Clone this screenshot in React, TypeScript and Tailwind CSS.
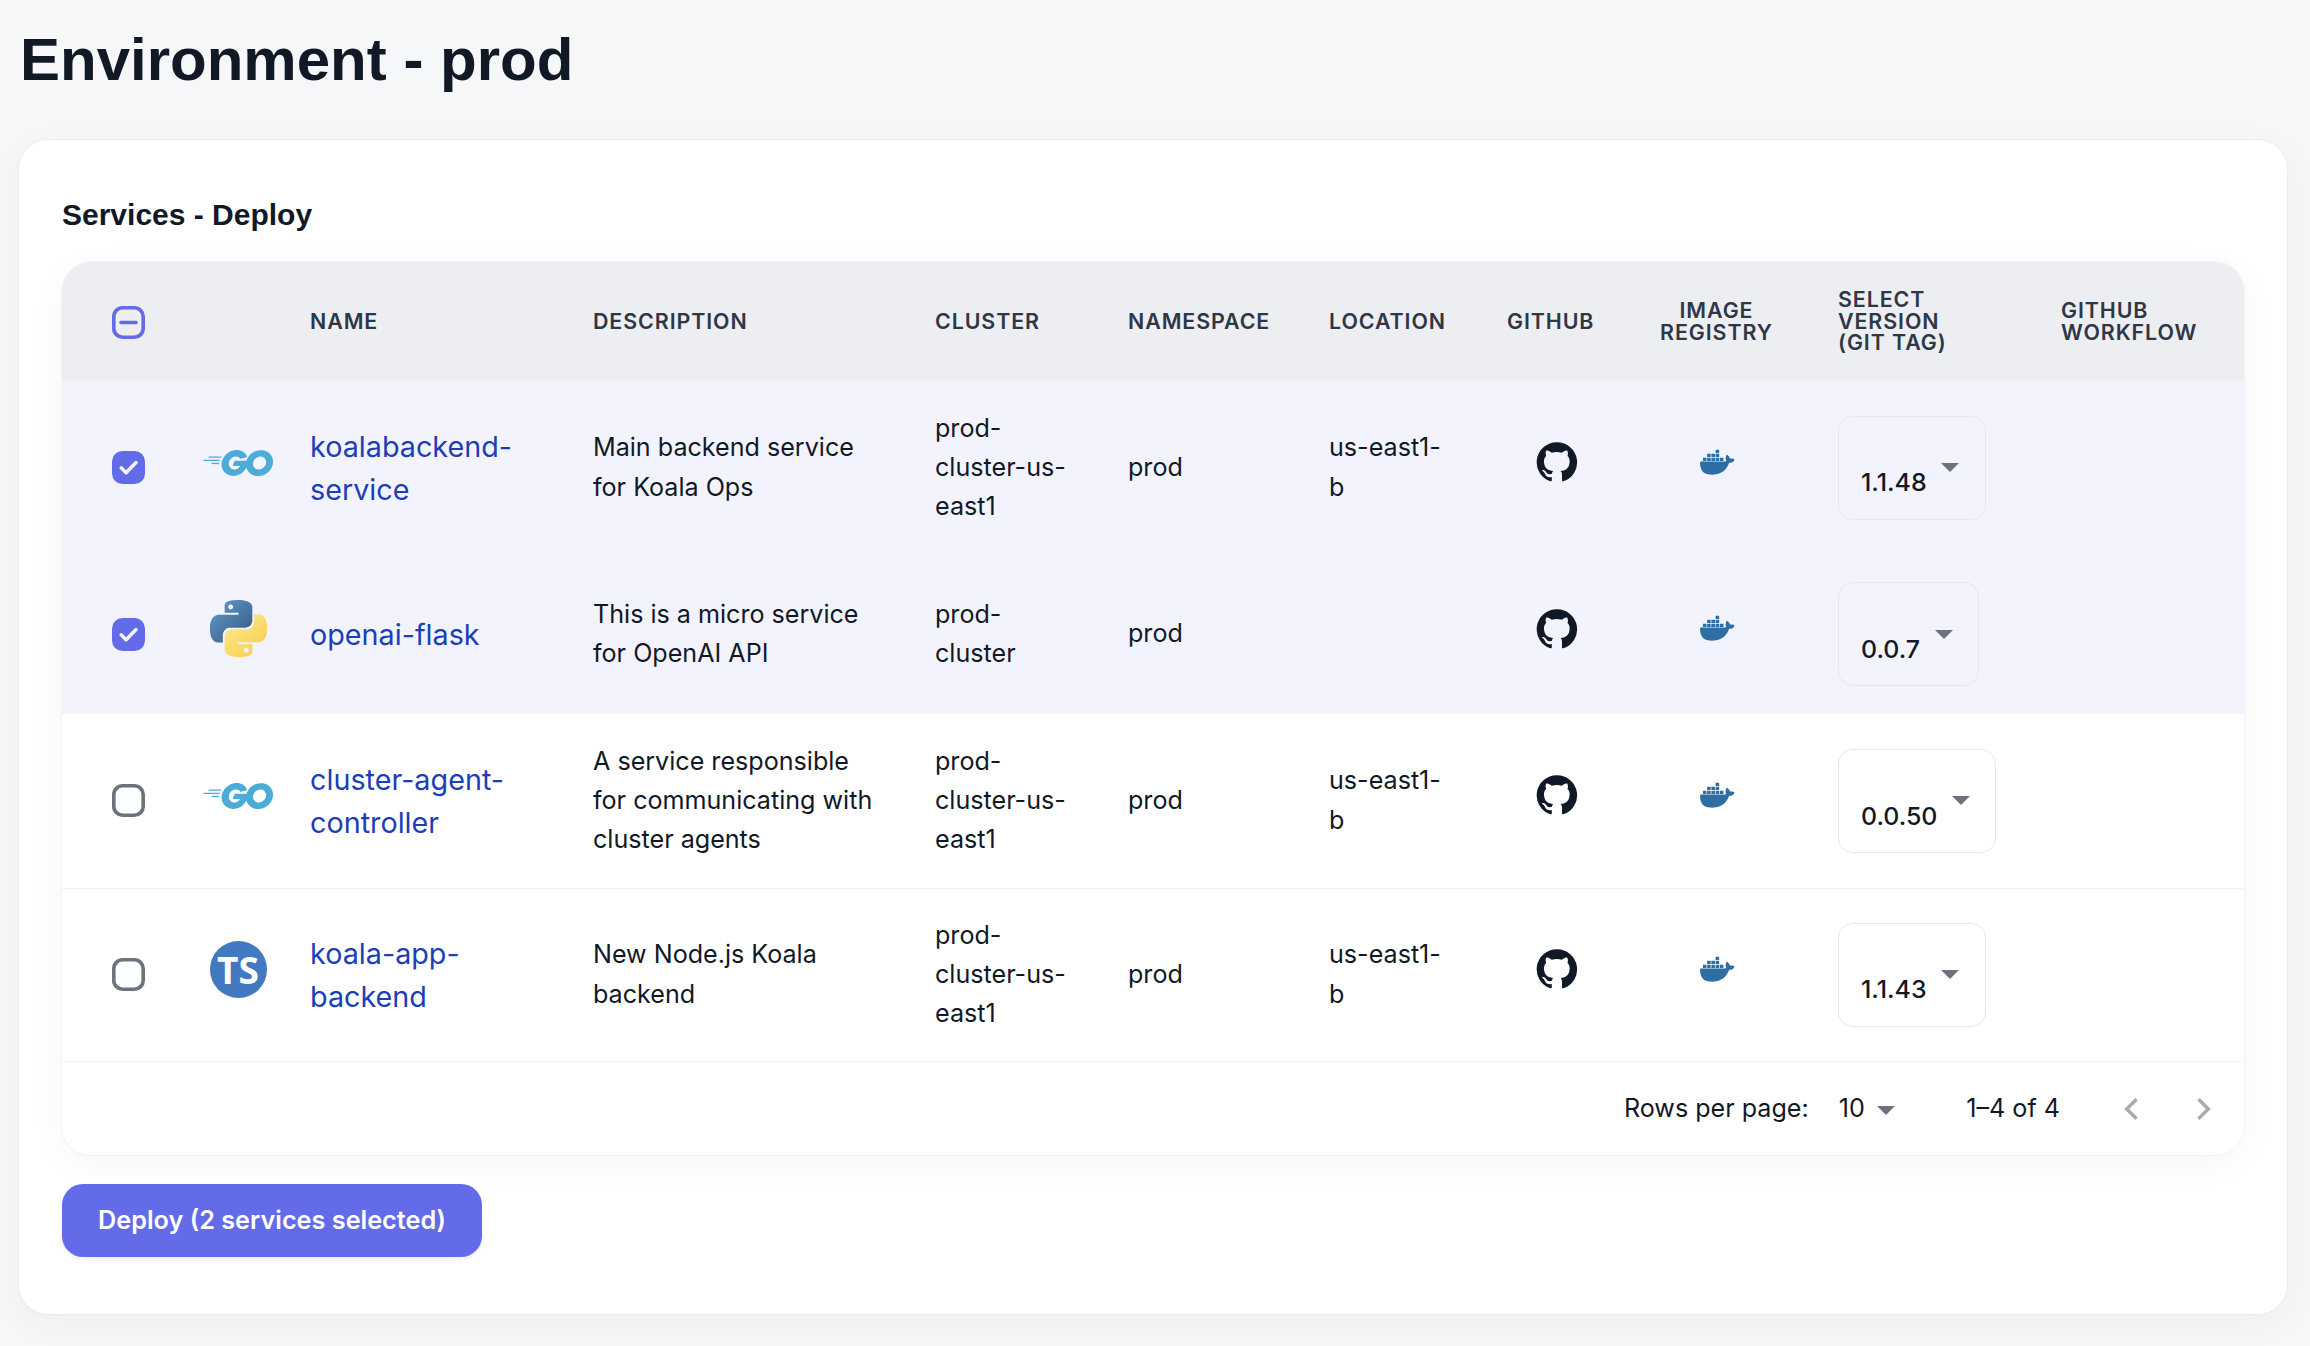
import type { ReactNode } from "react";
import { SiDocker, SiGo } from "react-icons/si";

type Language = "go" | "python" | "typescript";

interface Service {
  name: string;
  description: string;
  cluster: string;
  namespace: string;
  location: string;
  version: string;
  language: Language;
  selected: boolean;
}

const services: Service[] = [
  {
    name: "koalabackend-service",
    description: "Main backend service for Koala Ops",
    cluster: "prod-cluster-us-east1",
    namespace: "prod",
    location: "us-east1-b",
    version: "1.1.48",
    language: "go",
    selected: true,
  },
  {
    name: "openai-flask",
    description: "This is a micro service for OpenAI API",
    cluster: "prod-cluster",
    namespace: "prod",
    location: "",
    version: "0.0.7",
    language: "python",
    selected: true,
  },
  {
    name: "cluster-agent-controller",
    description: "A service responsible for communicating with cluster agents",
    cluster: "prod-cluster-us-east1",
    namespace: "prod",
    location: "us-east1-b",
    version: "0.0.50",
    language: "go",
    selected: false,
  },
  {
    name: "koala-app-backend",
    description: "New Node.js Koala backend",
    cluster: "prod-cluster-us-east1",
    namespace: "prod",
    location: "us-east1-b",
    version: "1.1.43",
    language: "typescript",
    selected: false,
  },
];

function Checkbox({ state }: { state: "on" | "off" | "mixed" }) {
  return (
    <svg viewBox="0 0 33 33" className="block size-[33px]" fill="none" strokeLinecap="round" strokeLinejoin="round">
      {state === "on" && (
        <>
          <rect width="33" height="33" rx="10.5" fill="#636be9" />
          <path d="M9.2 16.8l4.9 4.9 9.9-10.2" stroke="#f3f3fd" strokeWidth="3.5" />
        </>
      )}
      {state === "off" && (
        <rect x="1.8" y="1.8" width="29.4" height="29.4" rx="8.8" stroke="#6c737f" strokeWidth="3.6" />
      )}
      {state === "mixed" && (
        <>
          <rect x="1.8" y="1.8" width="29.4" height="29.4" rx="8.8" stroke="#636be9" strokeWidth="3.6" />
          <path d="M8.9 16.5h15.2" stroke="#636be9" strokeWidth="3.4" />
        </>
      )}
    </svg>
  );
}

function PythonLogo() {
  return (
    <svg viewBox="0 0 24 24" className="size-[57px]">
      <defs>
        <linearGradient id="py-blue" x1="0.1" y1="0.1" x2="0.8" y2="0.8">
          <stop offset="0" stopColor="#5f97c9" />
          <stop offset="1" stopColor="#3c648d" />
        </linearGradient>
        <linearGradient id="py-yellow" x1="0.2" y1="0.2" x2="0.8" y2="0.9">
          <stop offset="0" stopColor="#fce587" />
          <stop offset="1" stopColor="#f8d04f" />
        </linearGradient>
      </defs>
      <path
        fill="url(#py-blue)"
        d="M14.25.18l.9.2.73.26.59.3.45.32.34.34.25.34.16.33.1.3.04.26.02.2-.01.13V8.5l-.05.63-.13.55-.21.46-.26.38-.3.31-.33.25-.35.19-.35.14-.33.1-.3.07-.26.04-.21.02H8.77l-.69.05-.59.14-.5.22-.41.27-.33.32-.27.35-.2.36-.15.37-.1.35-.07.32-.04.27-.02.21v3.06H3.17l-.21-.03-.28-.07-.32-.12-.35-.18-.36-.26-.36-.36-.35-.46-.32-.59-.28-.73-.21-.88-.14-1.05-.05-1.23.06-1.22.16-1.04.24-.87.32-.71.36-.57.4-.44.42-.33.42-.24.4-.16.36-.1.32-.05.24-.01h.16l.06.01h8.16v-.83H6.18l-.01-2.75-.02-.37.05-.34.11-.31.17-.28.25-.26.31-.23.38-.2.44-.18.51-.15.58-.12.64-.1.71-.06.77-.04.84-.02 1.27.05zm-6.3 1.98l-.23.33-.08.41.08.41.23.34.33.22.41.09.41-.09.33-.22.23-.34.08-.41-.08-.41-.23-.33-.33-.22-.41-.09-.41.09z"
      />
      <path
        fill="url(#py-yellow)"
        d="M21.04 6.11l.28.06.32.12.35.18.36.27.36.35.35.47.32.59.28.73.21.88.14 1.04.05 1.23-.06 1.23-.16 1.04-.24.86-.32.71-.36.57-.4.45-.42.33-.42.24-.4.16-.36.09-.32.05-.24.02-.16-.01h-8.22v.82h5.84l.01 2.76.02.36-.05.34-.11.31-.17.29-.25.25-.31.24-.38.2-.44.17-.51.15-.58.13-.64.09-.71.07-.77.04-.84.01-1.27-.04-1.07-.14-.9-.2-.73-.25-.59-.3-.45-.33-.34-.34-.25-.34-.16-.33-.1-.3-.04-.25-.02-.2.01-.13v-5.34l.05-.64.13-.54.21-.46.26-.38.3-.32.33-.24.35-.2.35-.14.33-.1.3-.06.26-.04.21-.02.13-.01h5.84l.69-.05.59-.14.5-.21.41-.28.33-.32.27-.35.2-.36.15-.36.1-.35.07-.32.04-.28.02-.21V6.07h2.09l.14.01zm-6.47 14.25l-.23.33-.08.41.08.41.23.33.33.23.41.08.41-.08.33-.23.23-.33.08-.41-.08-.41-.23-.33-.33-.23-.41-.08-.41.08z"
      />
    </svg>
  );
}

function LanguageLogo({ language }: { language: Language }) {
  if (language === "go") return <SiGo className="mt-0.5 size-[70px] shrink-0 text-[#4dacd7]" />;
  if (language === "python") return <PythonLogo />;
  return (
    <div className="flex size-[57px] items-center justify-center rounded-full bg-[#4379c1] font-['Open_Sans'] text-[37px] leading-none font-bold text-white">
      TS
    </div>
  );
}

function GithubMark() {
  return (
    <svg viewBox="0 0 24 24" className="size-[43.6px]" fill="#111927">
      <path d="M12 1.27a11 11 0 00-3.48 21.46c.55.09.73-.28.73-.55v-1.84c-3.03.64-3.67-1.46-3.67-1.46-.55-1.29-1.28-1.65-1.28-1.65-.92-.65.1-.65.1-.65 1.1 0 1.73 1.1 1.73 1.1.92 1.65 2.57 1.2 3.21.92a2 2 0 01.64-1.47c-2.47-.27-5.04-1.19-5.04-5.5 0-1.1.46-2.1 1.2-2.84a3.76 3.76 0 010-2.93s.91-.28 3.11 1.1c1.8-.49 3.7-.49 5.5 0 2.1-1.38 3.02-1.1 3.02-1.1a3.76 3.76 0 01.1 2.93c.83.74 1.2 1.74 1.2 2.94 0 4.21-2.57 5.13-5.04 5.4.45.37.82.92.82 2.02v3.03c0 .27.1.64.73.55A11 11 0 0012 1.27" />
    </svg>
  );
}

function Caret({ className = "" }: { className?: string }) {
  return (
    <svg viewBox="0 0 18 9" className={`h-[9px] w-[18px] shrink-0 ${className}`} fill="#6c737f">
      <path d="M0 0h18L9 9z" />
    </svg>
  );
}

function Chevron({ flip = false }: { flip?: boolean }) {
  return (
    <svg
      viewBox="0 0 14 22"
      className={`h-[22px] w-[14px] ${flip ? "-scale-x-100" : ""}`}
      fill="none"
      stroke="#a7abb2"
      strokeWidth="3.4"
    >
      <path d="M12.5 1.2L2.7 11l9.8 9.8" />
    </svg>
  );
}

function Th({
  children,
  align = "text-left",
  padding = "pr-[28px] pl-[29px]",
}: {
  children?: ReactNode;
  align?: string;
  padding?: string;
}) {
  return (
    <th
      className={`h-[119px] align-middle text-[21.4px] leading-[21.4px] font-semibold tracking-[0.92px] text-[#2f3746] ${align} ${padding}`}
    >
      {children}
    </th>
  );
}

function ServiceRow({ service, height, line }: { service: Service; height: string; line: string }) {
  const cell = "pr-[26px] pl-[29px] align-middle";
  return (
    <tr className={`${height} ${line} ${service.selected ? "bg-[#f3f3fd]" : "bg-white"}`}>
      <td className="pl-[50px]">
        <Checkbox state={service.selected ? "on" : "off"} />
      </td>
      <td>
        <div className="mb-[11px] flex h-[57px] items-center justify-center">
          <LanguageLogo language={service.language} />
        </div>
      </td>
      <td className={`${cell} text-[28.75px] leading-[43px] text-[#1c3fb7]`}>{service.name}</td>
      <td className={cell}>{service.description}</td>
      <td className={cell}>{service.cluster}</td>
      <td className={cell}>{service.namespace}</td>
      <td className={cell}>{service.location}</td>
      <td>
        <div className="mb-[11px] flex justify-center pl-2">
          <GithubMark />
        </div>
      </td>
      <td>
        <div className="mb-[11px] flex justify-center pl-0.5">
          <SiDocker className="size-[34.5px] text-[#2d6fa5]" />
        </div>
      </td>
      <td className="pl-[36px]">
        <div className="flex h-[104px] w-fit items-center rounded-[15px] border border-[#e6e7eb] pr-[25.5px] pl-[22px] text-[24.9px] font-medium">
          <span className="pt-[31px]">{service.version}</span>
          <Caret className="ml-[14.5px]" />
        </div>
      </td>
      <td />
    </tr>
  );
}

const rowHeights = ["h-[173px]", "h-[160px]", "h-[174px]", "h-[173px]"];
const rowLines = ["", "", "border-b border-[#f0f1f4]", "border-b border-[#f0f1f4]"];

export default function App() {
  return (
    <div className="h-[1346px] w-[2310px] overflow-hidden bg-[#f6f7f9] pt-7 pl-[19px] font-['Inter',sans-serif] text-[25.12px] leading-[39.3px] text-[#111927]">
      <h1 className="h-28 pl-px font-['Liberation_Sans',sans-serif] text-[60px] leading-[64px] font-bold">
        Environment - prod
      </h1>
      <main className="h-[1174px] w-[2268px] rounded-[29px] bg-white px-[43px] pt-[56px] shadow-[0_9px_39px_rgba(0,0,0,0.04),0_0_0_1px_rgba(0,0,0,0.03)]">
        <h2 className="h-[66px] font-['Liberation_Sans',sans-serif] text-[30px] leading-[38px] font-bold">
          Services - Deploy
        </h2>
        <section className="h-[893px] w-[2182px] overflow-hidden rounded-[29px] bg-white shadow-[0_9px_39px_rgba(0,0,0,0.04),0_0_0_1px_rgba(0,0,0,0.03)]">
          <table className="w-[2182px] table-fixed border-collapse">
            <colgroup>
              <col className="w-[133px]" />
              <col className="w-[86px]" />
              <col className="w-[283px]" />
              <col className="w-[342px]" />
              <col className="w-[193px]" />
              <col className="w-[201px]" />
              <col className="w-[175px]" />
              <col className="w-[156px]" />
              <col className="w-[171px]" />
              <col className="w-[229px]" />
              <col className="w-[213px]" />
            </colgroup>
            <thead className="bg-[#edeef2]">
              <tr>
                <th className="pt-0.5 pl-[50px]">
                  <Checkbox state="mixed" />
                </th>
                <Th />
                <Th>NAME</Th>
                <Th>DESCRIPTION</Th>
                <Th>CLUSTER</Th>
                <Th>NAMESPACE</Th>
                <Th>LOCATION</Th>
                <Th padding="pl-[32px]">GITHUB</Th>
                <Th align="text-center" padding="px-[26px]">
                  IMAGE REGISTRY
                </Th>
                <Th padding="pr-[60px] pl-[36px]">SELECT VERSION (GIT TAG)</Th>
                <Th padding="pr-[28px] pl-[30px]">GITHUB WORKFLOW</Th>
              </tr>
            </thead>
            <tbody>
              {services.map((service, i) => (
                <ServiceRow key={service.name} service={service} height={rowHeights[i]} line={rowLines[i]} />
              ))}
            </tbody>
          </table>
          <footer className="flex h-[94px] items-center justify-end pr-[33px]">
            <span>Rows per page:</span>
            <span className="ml-[30px]">10</span>
            <Caret className="mt-[3px] ml-[12.5px]" />
            <span className="mr-[64px] ml-[71px]">1–4 of 4</span>
            <Chevron />
            <span className="w-[59px]" />
            <Chevron flip />
          </footer>
        </section>
        <button className="mt-[29px] block h-[73px] w-[420px] rounded-[21px] bg-[#636be9] text-[25.25px] font-semibold text-white shadow-[0_2px_4px_rgba(0,0,0,0.08)]">
          Deploy (2 services selected)
        </button>
      </main>
    </div>
  );
}
